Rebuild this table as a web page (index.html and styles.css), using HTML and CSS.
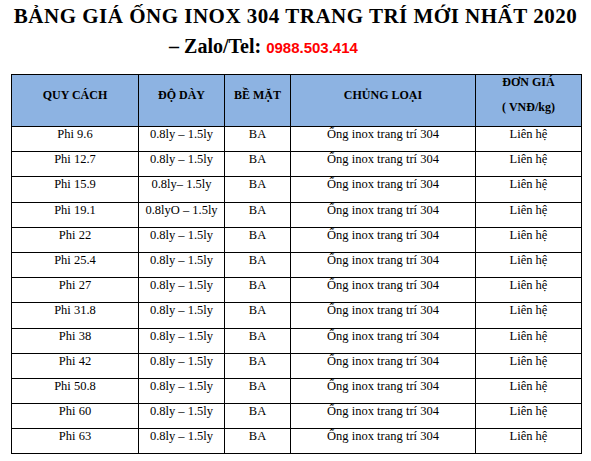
FILE: index.html
```html
<!DOCTYPE html>
<html lang="vi">
<head>
<meta charset="utf-8">
<link rel="stylesheet" href="styles.css">
</head>
<body>
<div class="page">
  <h1 class="title">BẢNG GIÁ ỐNG INOX 304 TRANG TRÍ MỚI NHẤT 2020<br><span class="line2">– Zalo/Tel: <span class="phone">0988.503.414</span></span></h1>
  <table class="price">
    <colgroup>
      <col class="c1"><col class="c2"><col class="c3"><col class="c4"><col class="c5">
    </colgroup>
    <thead>
      <tr>
        <th>QUY CÁCH</th>
        <th>ĐỘ DÀY</th>
        <th>BỀ MẶT</th>
        <th>CHỦNG LOẠI</th>
        <th><div class="h-line">ĐƠN GIÁ</div><div class="h-line">( VNĐ/kg)</div></th>
      </tr>
    </thead>
    <tbody>
      <tr><td>Phi 9.6</td><td>0.8ly – 1.5ly</td><td>BA</td><td>Ống inox trang trí 304</td><td>Liên hệ</td></tr>
      <tr><td>Phi 12.7</td><td>0.8ly – 1.5ly</td><td>BA</td><td>Ống inox trang trí 304</td><td>Liên hệ</td></tr>
      <tr><td>Phi 15.9</td><td>0.8ly– 1.5ly</td><td>BA</td><td>Ống inox trang trí 304</td><td>Liên hệ</td></tr>
      <tr><td>Phi 19.1</td><td>0.8lyO – 1.5ly</td><td>BA</td><td>Ống inox trang trí 304</td><td>Liên hệ</td></tr>
      <tr><td>Phi 22</td><td>0.8ly – 1.5ly</td><td>BA</td><td>Ống inox trang trí 304</td><td>Liên hệ</td></tr>
      <tr><td>Phi 25.4</td><td>0.8ly – 1.5ly</td><td>BA</td><td>Ống inox trang trí 304</td><td>Liên hệ</td></tr>
      <tr><td>Phi 27</td><td>0.8ly – 1.5ly</td><td>BA</td><td>Ống inox trang trí 304</td><td>Liên hệ</td></tr>
      <tr><td>Phi 31.8</td><td>0.8ly – 1.5ly</td><td>BA</td><td>Ống inox trang trí 304</td><td>Liên hệ</td></tr>
      <tr><td>Phi 38</td><td>0.8ly – 1.5ly</td><td>BA</td><td>Ống inox trang trí 304</td><td>Liên hệ</td></tr>
      <tr><td>Phi 42</td><td>0.8ly – 1.5ly</td><td>BA</td><td>Ống inox trang trí 304</td><td>Liên hệ</td></tr>
      <tr><td>Phi 50.8</td><td>0.8ly – 1.5ly</td><td>BA</td><td>Ống inox trang trí 304</td><td>Liên hệ</td></tr>
      <tr><td>Phi 60</td><td>0.8ly – 1.5ly</td><td>BA</td><td>Ống inox trang trí 304</td><td>Liên hệ</td></tr>
      <tr><td>Phi 63</td><td>0.8ly – 1.5ly</td><td>BA</td><td>Ống inox trang trí 304</td><td>Liên hệ</td></tr>
    </tbody>
  </table>
</div>
</body>
</html>
```
FILE: styles.css
```css
html, body {
  margin: 0;
  padding: 0;
  background: #ffffff;
}
.page {
  width: 591px;
  padding: 0;
  font-family: "Liberation Serif", "Times New Roman", serif;
  color: #000;
}
.title {
  margin: 0;
  padding-top: 1px;
  font-size: 21px;
  font-weight: bold;
  line-height: 30px;
  text-align: center;
  letter-spacing: 0.5px;
  white-space: nowrap;
}
.line2 {
  display: inline-block;
  margin-right: 64px;
  font-size: 20px;
  letter-spacing: 0;
}
.phone {
  font-family: "Liberation Sans", Arial, sans-serif;
  font-size: 15px;
  color: #ff0000;
}
.price {
  margin: 11px 0 0 11px;
  border-collapse: collapse;
  table-layout: fixed;
  width: 570px;
  font-size: 12.5px;
}
.c1 { width: 127px; }
.c2 { width: 86px; }
.c3 { width: 66px; }
.c4 { width: 185px; }
.c5 { width: 106px; }
.price th, .price td {
  border: 1px solid #000;
  text-align: center;
  padding: 0;
}
.price th {
  background: #8db3e2;
  height: 49px;
  font-size: 12px;
  font-weight: bold;
  vertical-align: middle;
  padding-bottom: 12px;
  line-height: 14px;
  box-sizing: border-box;
}
.h-line + .h-line {
  margin-top: 11px;
}
.price td {
  height: 25.2px;
  vertical-align: top;
  line-height: 14px;
  padding-top: 0;
  box-sizing: border-box;
}
```
